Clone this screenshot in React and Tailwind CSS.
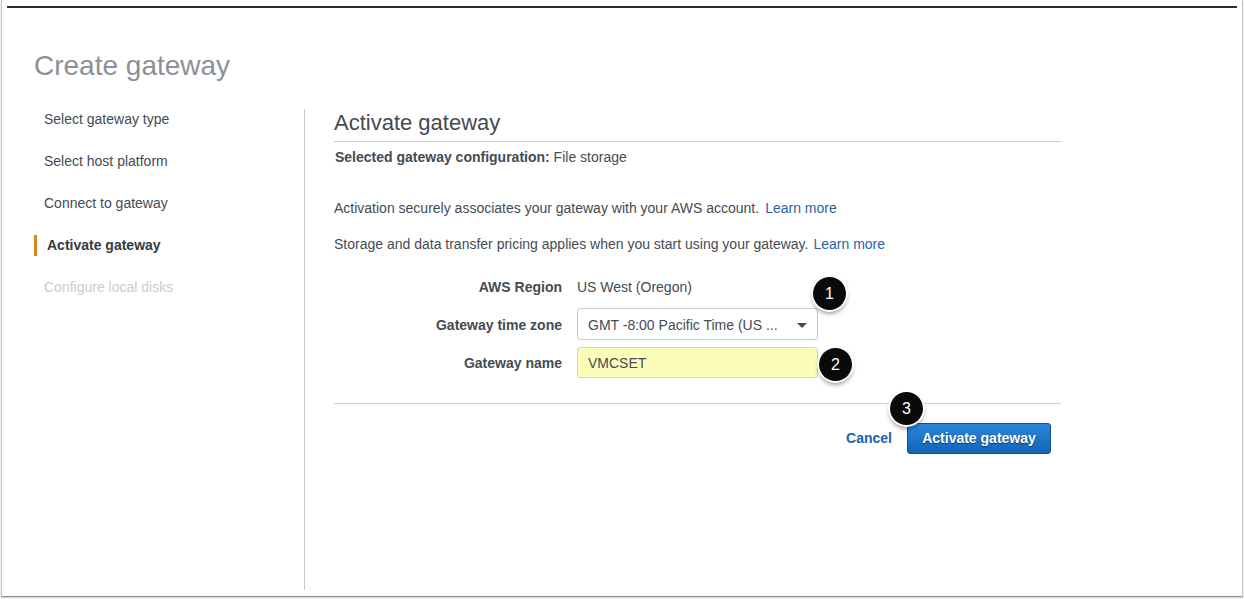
const NAV = [
  { label: "Select gateway type" },
  { label: "Select host platform" },
  { label: "Connect to gateway" },
  { label: "Activate gateway", active: true },
  { label: "Configure local disks", disabled: true },
];

function Badge({ n, className }) {
  return (
    <div
      className={`absolute flex h-[33px] w-[33px] items-center justify-center rounded-full bg-[#0a0a0a] text-[16px] text-white shadow-[0_3px_5px_rgba(0,0,0,0.5)] ring-2 ring-white ${className}`}
    >
      {n}
    </div>
  );
}

function NavItem({ label, active, disabled }) {
  if (active) {
    return (
      <div className="flex h-[42px] items-center">
        <div className="flex h-[21px] items-center border-l-[3px] border-[#d9861a] pl-[10px] text-[14px] font-bold text-[#333b44]">
          {label}
        </div>
      </div>
    );
  }
  return (
    <div className={`flex h-[42px] items-center pl-[10px] text-[14px] ${disabled ? "text-[#cccccc]" : "text-[#444b53]"}`}>
      {label}
    </div>
  );
}

function FormRow({ label, className, labelClass = "", children }) {
  return (
    <div className={`flex items-center ${className}`}>
      <div className={`w-[228px] text-right text-[14px] font-bold text-[#444b53] ${labelClass}`}>{label}</div>
      <div className="ml-[15px]">{children}</div>
    </div>
  );
}

export default function App() {
  return (
    <div className="h-[599px] w-[1244px] overflow-hidden bg-white pl-[1px] font-['Liberation_Sans',Arial,sans-serif]">
      <div className="h-[597px] w-[1242px] border-x border-b border-x-[#c4c4c4] border-b-[#8c8c8c] bg-white pt-[6px] shadow-[0_1px_2px_rgba(0,0,0,0.2)]">
        <div className="mx-[5px] h-[2px] bg-[#232f3e]" />

        <h1 className="mt-[41px] pl-[32px] text-[28px] leading-[34px] text-[#8c9196]">Create gateway</h1>

        <div className="mt-[26px] flex h-[481px] pl-[32px]">
          <div className="w-[271px] border-r border-[#c9c9c9]">
            <div className="-mt-[11px]">
              {NAV.map((item) => (
                <NavItem key={item.label} {...item} />
              ))}
            </div>
          </div>

          <div className="relative ml-[29px] w-[727px]">
            <h2 className="border-b border-[#c9c9c9] pb-[5px] pt-[1px] text-[22px] leading-[26px] text-[#444b53]">Activate gateway</h2>
            <p className="mt-[7px] pl-[1px] text-[14px] leading-[16px] text-[#444b53]">
              <span className="font-bold">Selected gateway configuration:</span> File storage
            </p>

            <p className="mt-[35px] text-[14px] leading-[16px] text-[#444b53]">
              Activation securely associates your gateway with your AWS account.
              <a className="ml-[6px] text-[#2a63a5]">Learn more</a>
            </p>
            <p className="mt-[20px] text-[14px] leading-[16px] text-[#444b53]">
              Storage and data transfer pricing applies when you start using your gateway.
              <a className="ml-[5px] text-[#2a63a5]">Learn more</a>
            </p>

            <FormRow label="AWS Region" className="mt-[27px] h-[16px]">
              <span className="text-[14px] text-[#444b53]">US West (Oregon)</span>
            </FormRow>

            <FormRow label="Gateway time zone" labelClass="pt-[2px]" className="mt-[13px]">
              <div className="flex h-[32px] w-[241px] items-center justify-between rounded-[3px] border border-[#c9c9c9] bg-white pl-[10px] pr-[10px] pt-[2px] text-[14px] text-[#444b53]">
                <span>GMT -8:00 Pacific Time (US ...</span>
                <span className="h-0 w-0 border-x-[5px] border-t-[5px] border-x-transparent border-t-[#444b53]" />
              </div>
            </FormRow>

            <FormRow label="Gateway name" labelClass="pt-[2px]" className="mt-[7px]">
              <div className="flex h-[31px] w-[241px] items-center rounded-[3px] border border-[#d6d8a8] bg-[#fbfdb9] pl-[10px] pt-[1px] text-[14px] text-[#444b53]">
                VMCSET
              </div>
            </FormRow>

            <div className="mt-[25px] border-t border-[#d0d0d0]" />

            <div className="mt-[19px] flex items-center justify-end pr-[10px]">
              <a className="text-[14px] font-bold text-[#1f5fa8]">Cancel</a>
              <button className="ml-[15px] h-[31px] w-[144px] rounded-[3px] border border-[#15508f] bg-gradient-to-b from-[#2a86d8] to-[#1265b8] text-[14px] font-bold text-white [text-shadow:0_1px_1px_rgba(0,0,0,0.5)]">
                Activate gateway
              </button>
            </div>

            <Badge n="1" className="left-[479px] top-[168px]" />
            <Badge n="2" className="left-[485px] top-[239px]" />
            <Badge n="3" className="left-[556px] top-[283px]" />
          </div>
        </div>
      </div>
    </div>
  );
}
